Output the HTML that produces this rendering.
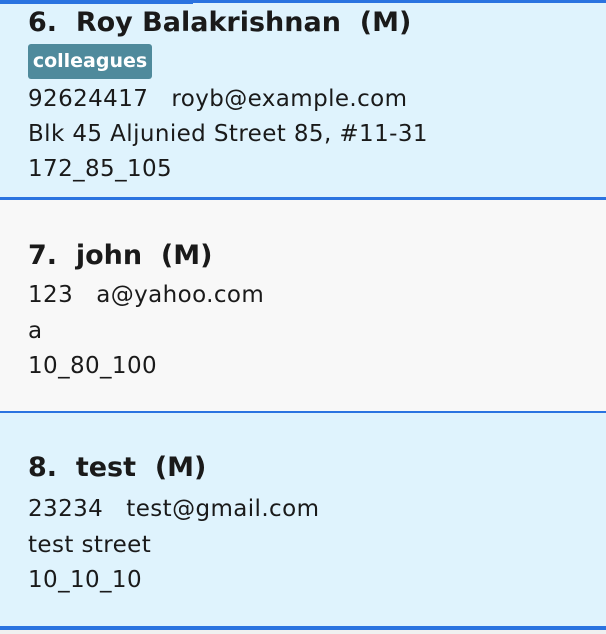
<!DOCTYPE html>
<html><head><style>
body{margin:0;width:606px;height:634px;overflow:hidden;background:#f0f0f0;font-family:"DejaVu Sans",sans-serif;color:#1a1a1a;position:relative}
.c{position:absolute;left:0;width:606px}
.t{position:absolute;left:28px;white-space:pre;line-height:1}
.n{font-size:27px;font-weight:bold}
.d{font-size:23px;letter-spacing:0.4px}
.tag{position:absolute;left:28px;top:44px;height:35px;width:124px;background:#4f8a9c;border-radius:3px;color:#fff;font-weight:bold;font-size:19px;line-height:35px;text-align:center}
</style></head><body>
<div class="c" style="top:0;height:198px;background:#dff3fd"></div>
<div class="c" style="top:0;height:3px;background:#2a73e0"></div>
<div class="c" style="top:0;height:4px;width:193px;background:#2a73e0"></div>
<div class="c" style="top:197px;height:3px;background:#2a73e0"></div>
<div class="c" style="top:200px;height:211px;background:#f8f8f8"></div>
<div class="c" style="top:411px;height:2px;background:#2a73e0"></div>
<div class="c" style="top:413px;height:214px;background:#dff3fd"></div>
<div class="c" style="top:626px;height:4px;background:#2a73e0"></div>

<div class="t n" style="top:9px">6.  Roy Balakrishnan  (M)</div>
<div class="tag">colleagues</div>
<div class="t d" style="top:88px">92624417   royb@example.com</div>
<div class="t d" style="top:123px">Blk 45 Aljunied Street 85, #11-31</div>
<div class="t d" style="top:158px">172_85_105</div>

<div class="t n" style="top:242px">7.  john  (M)</div>
<div class="t d" style="top:284px">123   a@yahoo.com</div>
<div class="t d" style="top:320px">a</div>
<div class="t d" style="top:355px">10_80_100</div>

<div class="t n" style="top:454px">8.  test  (M)</div>
<div class="t d" style="top:498px">23234   test@gmail.com</div>
<div class="t d" style="top:534px">test street</div>
<div class="t d" style="top:569px">10_10_10</div>
</body></html>
